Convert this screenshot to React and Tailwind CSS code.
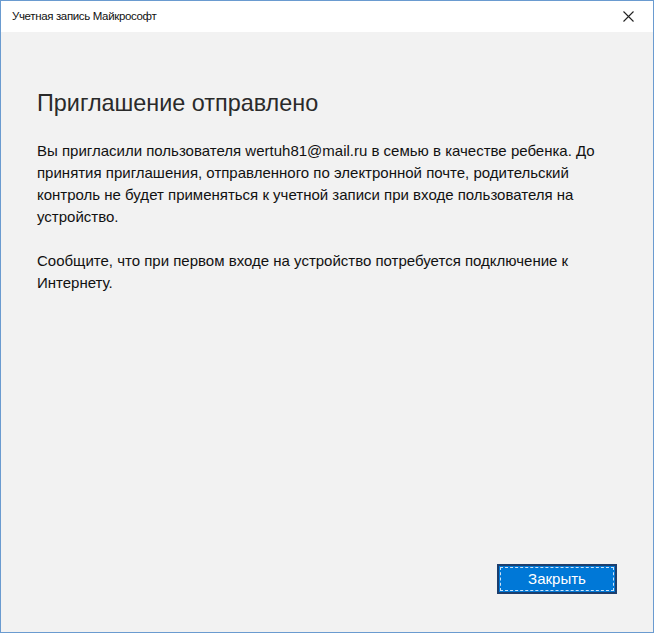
export default function App() {
  return (
    <div className="w-[654px] h-[633px] flex flex-col border border-[#6a9bd0] bg-[#f2f2f2] font-['Liberation_Sans',Arial,sans-serif] text-black">
      <header className="h-[31px] bg-white flex items-center justify-between pl-[11px] pr-[19px] shrink-0">
        <span className="text-[11.5px] tracking-[-0.35px] text-[#111]">
          Учетная запись Майкрософт
        </span>
        <svg className="w-[11px] h-[11px]" viewBox="0 0 11 11" fill="none" stroke="#222" strokeWidth="1.1">
          <path d="M0.5 0.5l10 10M10.5 0.5l-10 10" />
        </svg>
      </header>

      <main className="flex-1 flex flex-col px-[36px] pt-[56px]">
        <h1 className="text-[23.4px] font-light text-[#2a2a2a] leading-[30px]">
          Приглашение отправлено
        </h1>
        <div className="mt-[22px] max-w-[560px] text-[15px] leading-[22px] text-[#111]">
          <p>
            Вы пригласили пользователя wertuh81@mail.ru в семью в качестве ребенка. До принятия
            приглашения, отправленного по электронной почте, родительский контроль не будет
            применяться к учетной записи при входе пользователя на устройство.
          </p>
          <p className="mt-[22px]">
            Сообщите, что при первом входе на устройство потребуется подключение к Интернету.
          </p>
        </div>

        <div className="mt-auto flex justify-end pb-[38px]">
          <button className="w-[120px] h-[30px] bg-[#0078d7] border-2 border-[#1c3f6e] p-[1px]">
            <span className="flex items-center justify-center w-full h-full border border-dashed border-[#cfe3f7] text-white text-[15px]">
              Закрыть
            </span>
          </button>
        </div>
      </main>
    </div>
  );
}
